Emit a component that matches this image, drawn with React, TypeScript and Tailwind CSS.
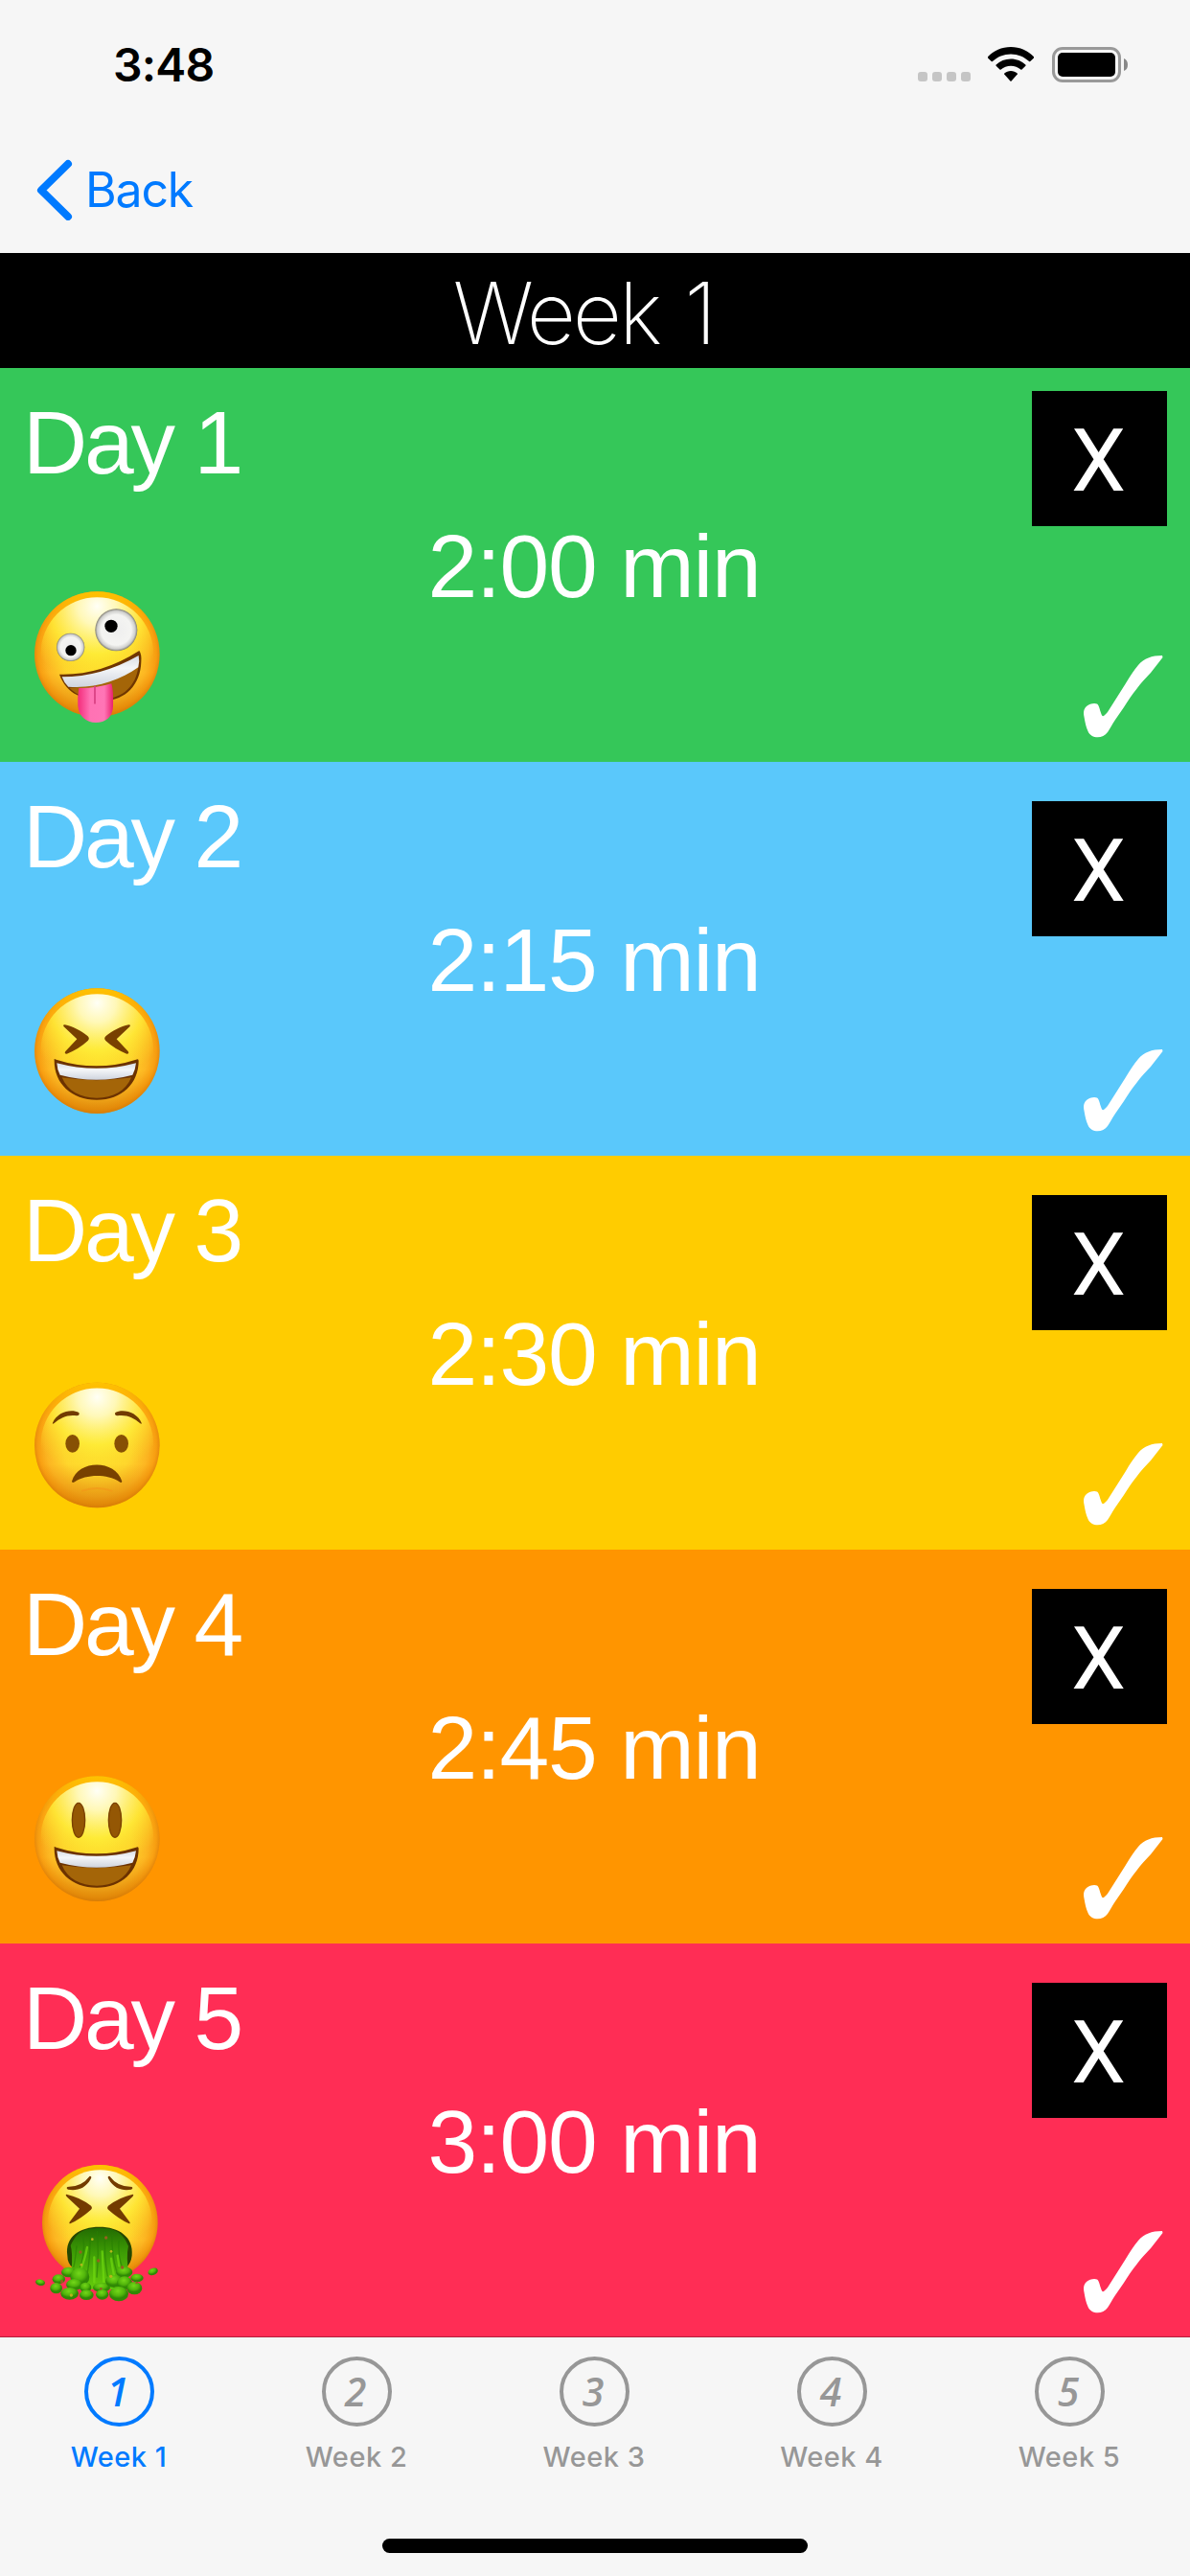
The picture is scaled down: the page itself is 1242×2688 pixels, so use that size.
import type { ReactNode } from "react";
import { clsx } from "clsx";

type Mood = "zany" | "laughing" | "worried" | "smiling" | "sick";

type Day = {
  label: string;
  time: string;
  mood: Mood;
  background: string;
};

const days: Day[] = [
  { label: "Day 1", time: "2:00 min", mood: "zany", background: "bg-[#35c759]" },
  { label: "Day 2", time: "2:15 min", mood: "laughing", background: "bg-[#5ac8fb]" },
  { label: "Day 3", time: "2:30 min", mood: "worried", background: "bg-[#ffcc00]" },
  { label: "Day 4", time: "2:45 min", mood: "smiling", background: "bg-[#ff9500]" },
  { label: "Day 5", time: "3:00 min", mood: "sick", background: "bg-[#ff2d55]" },
];

const weeks = [1, 2, 3, 4, 5];

export default function App() {
  return (
    <main className="flex h-[2688px] w-[1242px] flex-col overflow-hidden bg-[#f6f6f6] font-['Inter','Liberation_Sans',sans-serif]">
      <StatusBar />
      <NavBar />
      <h1 className="flex h-[120px] shrink-0 items-center justify-center bg-black pt-1 pr-6 text-[89px] leading-none font-extralight tracking-[-3px] text-white [word-spacing:4px]">
        Week 1
      </h1>
      {days.map((day, index) => (
        <DayRow key={day.label} day={day} first={index === 0} />
      ))}
      <TabBar />
    </main>
  );
}

function StatusBar() {
  return (
    <div className="flex h-[134px] shrink-0 justify-between pr-16 pl-[118px]">
      <span className="mt-[38px] text-[48px] leading-[60px] font-semibold tracking-[-0.8px] text-black">3:48</span>
      <div className="mt-[49px] flex">
        <div className="mt-[26px] flex gap-[5px]">
          {[0, 1, 2, 3].map((dot) => (
            <span key={dot} className="size-2.5 rounded-[3px] bg-[#c5c5c5]" />
          ))}
        </div>
        <svg className="ml-[18px] h-[37px] w-12" viewBox="0 0 48 37">
          <path d="M24 0C33.500 0 42 4 48 10.200Q48.500 10.800 48 11.400L44.300 15Q43.700 15.500 43.100 15C38 10.200 31.500 7.400 24 7.400S10 10.200 4.900 15Q4.300 15.500 3.700 15L0 11.400Q-.5 10.800 0 10.200C6 4 14.500 0 24 0Z" />
          <path d="M24 12.500C30 12.500 35.300 14.800 39.300 18.500Q40 19.100 39.400 19.700L35.500 23.600Q35 24.100 34.300 23.600C31.500 21.200 28 19.800 24 19.800S16.500 21.200 13.700 23.600Q13 24.100 12.500 23.600L8.600 19.700Q8 19.100 8.700 18.500C12.700 14.800 18 12.500 24 12.500Z" />
          <path d="M24 25C26.500 25 28.900 25.900 30.700 27.400Q31.300 28 30.800 28.600L24.600 35.400Q24 36 23.400 35.400L17.200 28.600Q16.700 28 17.300 27.400C19.100 25.900 21.500 25 24 25Z" />
        </svg>
        <svg className="ml-[19px] h-[37px] w-20" viewBox="0 0 80 37">
          <rect x="1.500" y="1.500" width="69" height="34" rx="9.500" fill="none" stroke="#999" strokeWidth="3" />
          <rect x="6" y="6" width="60" height="25" rx="5" />
          <path d="M75 12Q79 13.500 79 18.500T75 25Z" fill="#888" />
        </svg>
      </div>
    </div>
  );
}

function NavBar() {
  return (
    <nav className="flex h-[130px] shrink-0 pl-[37px] text-[#007aff]">
      <svg className="mt-8 h-16 w-10" viewBox="0 0 40 64" fill="none" stroke="currentColor" strokeWidth="8" strokeLinecap="round" strokeLinejoin="round">
        <path d="M34 5L6 32.500L34 60" />
      </svg>
      <span className="mt-[33px] ml-3 text-[50px] leading-[62px] tracking-[-1.2px]">Back</span>
    </nav>
  );
}

function DayRow({ day, first }: { day: Day; first: boolean }) {
  return (
    <section
      className={clsx(
        "grid h-[411px] shrink-0 grid-cols-[420px_400px_422px] font-['Liberation_Sans',Arial,sans-serif] text-white",
        day.background
      )}
    >
      <div className="flex flex-col">
        <h2 className="mt-[26px] pl-[24px] text-[93px] leading-[104px] tracking-[-3.2px]">{day.label}</h2>
        <Emoji mood={day.mood} />
      </div>
      <p className="mt-[155px] text-center text-[93px] leading-[104px] tracking-[-1.2px] whitespace-nowrap">{day.time}</p>
      <div className="flex flex-col items-end justify-between pb-[24px]">
        <button
          className={clsx(
            "mr-6 flex size-[141px] justify-center bg-black pt-[20px] pr-0.5 font-['Roboto',sans-serif] text-[91px] leading-[107px]",
            first ? "mt-6" : "mt-[41px]"
          )}
        >
          X
        </button>
        <svg className="mr-[28px] h-[88px] w-[84px]" viewBox="0 0 84 88" fill="currentColor">
          <path d="M83 1C72 1 64 4 58 11C53 17 49 23 45 30L26 60Q22 65 20.500 64C18 60 17.500 53 15 51.500C12 50 7 51.500 4 54C1 57 .5 60 1.500 65C2.500 71 3.500 76 5.500 80C8.500 88 21 88.500 26 81C29 77 31 72 34 68L43 55C51 42 61 29 71 19L83.500 3Z" />
        </svg>
      </div>
    </section>
  );
}

function TabBar() {
  return (
    <footer className="-mt-px flex h-[250px] shrink-0 flex-col border-t border-[#b3203c]">
      <div className="grid w-[1240px] grid-cols-5">
        {weeks.map((week) => (
          <div
            key={week}
            className={clsx("flex flex-col items-center pt-5", week === 1 ? "text-[#007aff]" : "text-[#979797]")}
          >
            <span className="flex size-[73px] items-center justify-center rounded-full border-4 border-current pr-0.5 pb-px font-['Open_Sans',sans-serif] text-[41px] leading-none font-semibold italic">
              {week}
            </span>
            <span className="mt-3 text-[29px] leading-10 font-medium tracking-[0.5px]">Week {week}</span>
          </div>
        ))}
      </div>
      <div className="mt-auto mb-6 h-[15px] w-[444px] self-center rounded-full bg-black" />
    </footer>
  );
}

const faceViewBox: Record<Mood, string> = {
  zany: "0 9 480 540",
  laughing: "0 -3 480 540",
  worried: "0 0 480 540",
  smiling: "0 3 480 540",
  sick: "0 21 480 540",
};

function Emoji({ mood }: { mood: Mood }) {
  return (
    <svg className="mt-[89px] ml-5 h-[180px] w-40" viewBox={faceViewBox[mood]}>
      <defs>
        <radialGradient id={`${mood}-base`}>
          <stop offset="0" stopColor="#ffe12b" />
          <stop offset="0.55" stopColor="#ffd52c" />
          <stop offset="0.82" stopColor="#fdb722" />
          <stop offset="0.94" stopColor="#f9a012" />
          <stop offset="1" stopColor="#e88a0c" />
        </radialGradient>
        <radialGradient id={`${mood}-shine`} cx="0.5" cy="0.08" r="0.68">
          <stop offset="0" stopColor="#fffff6" />
          <stop offset="0.25" stopColor="#fffbc0" stopOpacity="0.95" />
          <stop offset="0.62" stopColor="#fff23c" stopOpacity="0.75" />
          <stop offset="1" stopColor="#ffe22c" stopOpacity="0" />
        </radialGradient>
        <linearGradient id={`${mood}-rim`} x2="0" y2="1">
          <stop offset="0" stopColor="#ffc300" />
          <stop offset="0.3" stopColor="#ffab0a" stopOpacity="0.3" />
          <stop offset="0.65" stopColor="#d87900" stopOpacity="0" />
          <stop offset="1" stopColor="#ca7200" stopOpacity="0.55" />
        </linearGradient>
        <linearGradient id={`${mood}-teeth`} x2="0" y2="1">
          <stop offset="0" stopColor="#d9dde4" />
          <stop offset="0.4" stopColor="#f4f6f8" />
          <stop offset="1" stopColor="#cfd4de" />
        </linearGradient>
      </defs>
      {moods[mood]}
    </svg>
  );
}

function Face({ mood, cx = 244, cy, r = 196 }: { mood: Mood; cx?: number; cy: number; r?: number }) {
  return (
    <>
      <circle cx={cx} cy={cy} r={r} fill={`url(#${mood}-base)`} />
      <circle cx={cx} cy={cy} r={r} fill={`url(#${mood}-rim)`} />
      <circle cx={cx} cy={cy - 2} r={r * 0.9} fill={`url(#${mood}-shine)`} />
    </>
  );
}

function Grin({ mood, y = 0 }: { mood: Mood; y?: number }) {
  return (
    <g transform={`translate(0 ${y})`}>
      <path d="M110 272Q108 268 116 272Q242 312 366 272Q374 268 374 276C374 347 322 398 243 398S110 347 110 276Z" fill="#6c3200" />
      <path d="M134 328Q242 345 351 328C334 370 294 392 243 392S151 370 134 328Z" fill="#a46508" />
      <path d="M118 283Q242 316 366 283Q364 303 355 320Q242 350 128 320Q119 303 118 283Z" fill={`url(#${mood}-teeth)`} />
    </g>
  );
}

const moods: Record<Mood, ReactNode> = {
  zany: (
    <>
      <defs>
        <radialGradient id="eyeball">
          <stop offset="0" stopColor="#eeeeee" />
          <stop offset="0.72" stopColor="#f4f4f2" />
          <stop offset="0.9" stopColor="#cfcfcd" />
          <stop offset="1" stopColor="#7f7c70" />
        </radialGradient>
        <linearGradient id="tongue">
          <stop offset="0" stopColor="#f32b7a" />
          <stop offset="0.35" stopColor="#ff72b4" />
          <stop offset="0.75" stopColor="#ff75b6" />
          <stop offset="1" stopColor="#ea206c" />
        </linearGradient>
      </defs>
      <Face mood="zany" cy={248} />
      <circle cx="304" cy="172" r="66" fill="url(#eyeball)" />
      <circle cx="161" cy="226" r="44" fill="url(#eyeball)" />
      <circle cx="288" cy="160" r="20" fill="#000" />
      <circle cx="162" cy="236" r="17" fill="#000" />
      <path d="M126 311Q254 315 376 237Q384 248 382 272C380 343 332 392 268 393C205 394 149 374 126 311Z" fill="#6f3600" />
      <path d="M157 353Q276 347 373 288C366 347 323 387 267 387C220 388 181 379 157 353Z" fill="#a46508" />
      <path d="M134 319Q257 319 374 252Q378 271 373 289C314 331 235 357 154 350Q140 337 134 319Z" fill="url(#zany-teeth)" />
      <path d="M187 354Q239 355 289 340Q296 365 294 410C294 444 270 462 240 462S186 441 184 410Q182 381 187 354Z" fill="url(#tongue)" />
      <path d="M237 348V402" stroke="#d83e80" strokeWidth="5" strokeLinecap="round" />
    </>
  ),
  laughing: (
    <>
      <Face mood="laughing" cy={245} />
      <path d="M143 163C169 169 192 180 215 199Q222 206 215 213Q187 239 149 254Q140 254 145 246L181 208L139 168Q136 162 143 163Z" fill="#784000" />
      <path d="M343 163C317 169 294 180 271 199Q264 206 271 213Q299 239 337 254Q346 254 341 246L305 208L347 168Q350 162 343 163Z" fill="#784000" />
      <Grin mood="laughing" />
    </>
  ),
  worried: (
    <>
      <Face mood="worried" cy={249} />
      <path d="M105 179C119 145 163 134 187 147Q191 156 180 157C151 153 130 163 109 181Q103 184 105 179ZM383 179C369 145 325 134 301 147Q297 156 308 157C337 153 358 163 379 181Q385 184 383 179Z" fill="#713b00" />
      <ellipse cx="167" cy="244" rx="22" ry="28" fill="#875004" />
      <ellipse cx="320" cy="244" rx="22" ry="28" fill="#875004" />
      <path d="M165 362C184 293 302 293 322 362Q321 369 313 363C275 339 210 339 174 364Q166 369 165 362Z" fill="#784100" />
      <path d="M198 392Q243 376 290 392" fill="none" stroke="#f39718" strokeWidth="6" strokeLinecap="round" opacity="0.65" />
    </>
  ),
  smiling: (
    <>
      <Face mood="smiling" cy={251} />
      <ellipse cx="186" cy="193" rx="20" ry="54" fill="#945704" stroke="#7b4100" strokeWidth="4" />
      <ellipse cx="300" cy="193" rx="20" ry="54" fill="#945704" stroke="#7b4100" strokeWidth="4" />
      <Grin mood="smiling" y={6} />
    </>
  ),
  sick: (
    <>
      <defs>
        <linearGradient id="goo" x2="0" y2="1">
          <stop offset="0" stopColor="#236c02" />
          <stop offset="0.4" stopColor="#3d9c05" />
          <stop offset="1" stopColor="#66cd0b" />
        </linearGradient>
        <radialGradient id="drop" cx="0.45" cy="0.3">
          <stop offset="0" stopColor="#73d719" />
          <stop offset="0.65" stopColor="#51b50b" />
          <stop offset="1" stopColor="#308905" />
        </radialGradient>
      </defs>
      <Face mood="sick" cx={253} cy={238} r={181} />
      <g fill="#733b00">
        <path d="M151 126Q196 126 221 92Q229 92 224 101C207 132 179 139 153 134Q146 130 151 126ZM353 126Q308 126 283 92Q275 92 280 101C297 132 325 139 351 134Q358 130 353 126Z" />
        <path d="M148 149Q190 158 225 185Q231 192 224 198Q193 226 160 241Q154 240 160 233L189 194L149 157Q144 149 148 149ZM356 149Q314 158 279 185Q273 192 280 198Q311 226 344 241Q350 240 344 233L315 194L355 157Q360 149 356 149Z" />
      </g>
      <path d="M151 341C143 281 190 251 251 251S359 282 353 341Q350 366 334 379H168Q151 365 151 341Z" fill="#254801" />
      <path d="M164 389Q168 330 161 310C181 264 206 255 252 255S323 266 342 311Q334 345 344 405L320 446H184Z" fill="url(#goo)" />
      <g fill="none" stroke="#287e04" strokeWidth="4" opacity="0.6">
        <path d="M180 310Q175 360 170 378M201 282Q208 340 186 392M222 270Q224 335 213 402M244 264Q250 330 243 410M269 267Q265 340 277 407M291 277Q289 340 305 390M312 294Q309 345 324 381" />
      </g>
      <g fill="none" stroke="#71da10" strokeWidth="7" strokeLinecap="round" opacity="0.7">
        <path d="M213 315Q206 355 187 399M235 346V424M260 328L265 423M288 350Q291 374 298 408M308 341L313 374" />
      </g>
      <g fill="url(#drop)">
        <ellipse cx="155" cy="393" rx="23" ry="16" />
        <ellipse cx="124" cy="415" rx="20" ry="15" />
        <ellipse cx="116" cy="443" rx="19" ry="17" />
        <ellipse cx="190" cy="408" rx="30" ry="29" />
        <ellipse cx="173" cy="432" rx="26" ry="18" />
        <ellipse cx="158" cy="460" rx="28" ry="19" />
        <ellipse cx="208" cy="441" rx="18" ry="16" />
        <ellipse cx="211" cy="464" rx="22" ry="16" />
        <ellipse cx="258" cy="441" rx="27" ry="15" />
        <ellipse cx="260" cy="463" rx="20" ry="16" />
        <ellipse cx="329" cy="393" rx="26" ry="17" />
        <ellipse cx="369" cy="411" rx="20" ry="13" />
        <ellipse cx="297" cy="421" rx="27" ry="20" />
        <ellipse cx="330" cy="427" rx="24" ry="21" />
        <ellipse cx="361" cy="443" rx="24" ry="20" />
        <ellipse cx="312" cy="461" rx="30" ry="23" />
        <ellipse cx="66" cy="425" rx="15" ry="10" transform="rotate(12 66 425)" />
        <ellipse cx="419" cy="391" rx="16" ry="11" transform="rotate(-20 419 391)" />
      </g>
      <g fill="#b6b51b">
        <circle cx="229" cy="290" r="4" />
        <circle cx="288" cy="328" r="4" />
        <circle cx="287" cy="406" r="5" />
        <circle cx="163" cy="465" r="5" />
        <circle cx="195" cy="370" r="4" />
      </g>
      <g fill="#966020">
        <circle cx="272" cy="285" r="5" />
        <circle cx="192" cy="330" r="5" />
        <circle cx="248" cy="357" r="5" />
        <circle cx="323" cy="378" r="5" />
        <circle cx="134" cy="422" r="5" />
        <circle cx="368" cy="426" r="4" />
        <circle cx="256" cy="445" r="4" />
      </g>
    </>
  ),
};
